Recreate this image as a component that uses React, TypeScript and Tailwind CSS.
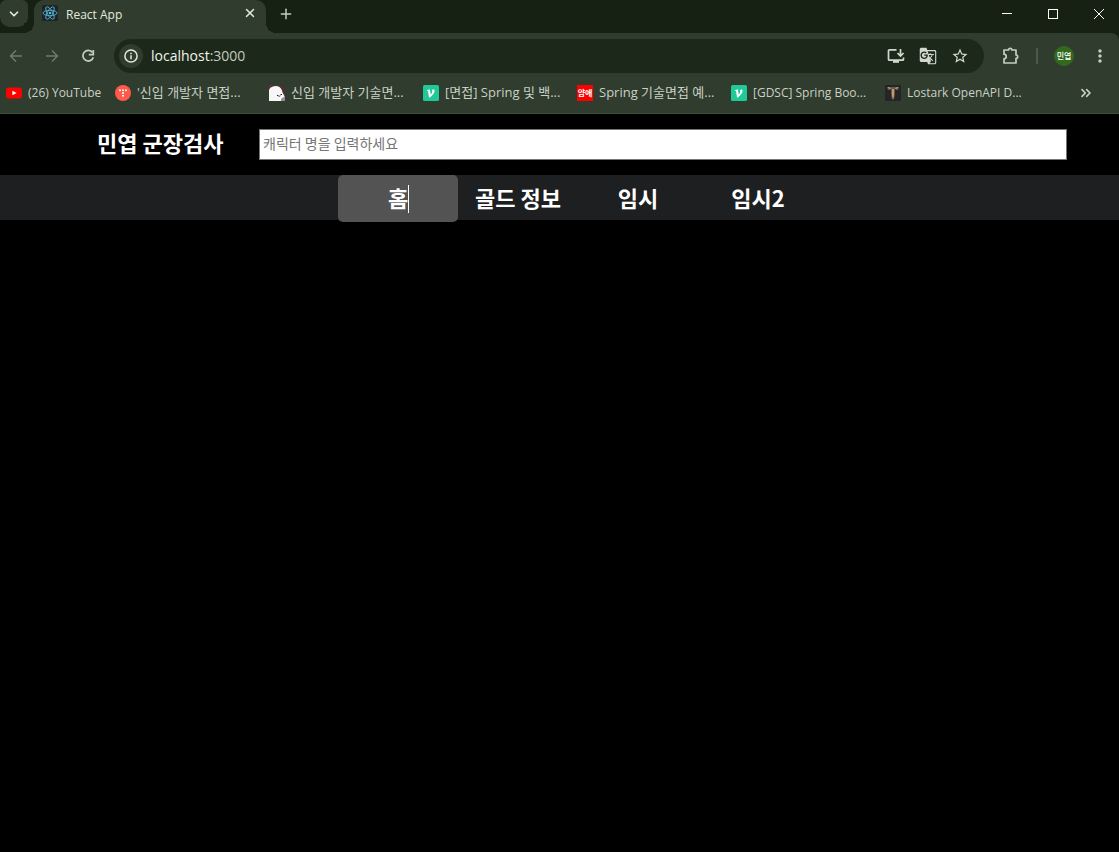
import { ReactNode } from 'react';
import { ChevronDown, ChevronsRight, Plus, X } from 'lucide-react';
import { MdGTranslate, MdMoreVert, MdStarBorder } from 'react-icons/md';

interface Bookmark {
  title: string;
  icon: ReactNode;
  className: string;
}

function ReactLogo() {
  return (
    <svg viewBox="0 0 16 16" className="size-4 shrink-0" fill="none" stroke="#53c1de" strokeWidth="0.8">
      <rect width="16" height="16" rx="1.5" fill="#20232a" stroke="none" />
      <ellipse cx="8" cy="8" rx="7" ry="2.7" />
      <ellipse cx="8" cy="8" rx="7" ry="2.7" transform="rotate(60 8 8)" />
      <ellipse cx="8" cy="8" rx="7" ry="2.7" transform="rotate(120 8 8)" />
      <circle cx="8" cy="8" r="1.3" fill="#53c1de" stroke="none" />
    </svg>
  );
}

function YoutubeIcon() {
  return (
    <svg viewBox="0 0 16 16" className="size-4 shrink-0">
      <rect y="2.5" width="16" height="11" rx="2.8" fill="#f00" />
      <path d="M6.4 5.7v4.6L10.6 8z" fill="#fff" />
    </svg>
  );
}

function TistoryIcon() {
  return (
    <svg viewBox="0 0 16 16" className="size-4 shrink-0">
      <circle cx="8" cy="8" r="8" fill="#ff5a4a" />
      <g fill="#fff">
        <circle cx="5" cy="5.2" r="1" />
        <circle cx="8" cy="5.2" r="1" />
        <circle cx="11" cy="5.2" r="1" />
        <circle cx="8" cy="8" r="1" />
        <circle cx="8" cy="10.8" r="1" />
      </g>
    </svg>
  );
}

function SealIcon() {
  return (
    <svg viewBox="0 0 16 16" className="size-4 shrink-0">
      <rect width="16" height="16" fill="#4b3033" />
      <path d="M0 0h4L0 3z" fill="#7a2633" />
      <path d="M0 16V5c1-3 4-4 7-4 4 0 6 3 6.5 6.5L16 12v4z" fill="#f7f7f7" />
      <path d="M12 14l4-3v5h-4z" fill="#8f8f95" />
      <path d="M8 10.5h1.5M11.5 9.5h1.5" stroke="#222" />
      <path d="M9.5 11.5l2-.7" stroke="#555" />
    </svg>
  );
}

function VelogIcon() {
  return (
    <svg viewBox="0 0 16 16" className="size-4 shrink-0">
      <rect width="16" height="16" rx="1.5" fill="#20c997" />
      <path
        d="M4 5.3L6.9 4.2 7.7 9.6C9.3 7.8 9.7 6.6 9 5.2 9.2 4.3 11.6 3.9 11.6 5.7 11.6 7.7 9.3 10.6 6.8 12.5H6L5 5.9H4z"
        fill="#fff"
      />
    </svg>
  );
}

function GoodIcon() {
  return (
    <span className="flex size-4 shrink-0 items-center justify-center overflow-hidden bg-[#f00] text-[8px] leading-none font-bold text-white">
      얌애
    </span>
  );
}

function LostarkIcon() {
  return (
    <svg viewBox="0 0 16 16" className="size-4 shrink-0">
      <rect width="16" height="16" fill="#252426" />
      <path d="M2 2h12l-1 3h-2l-1-1.2V9l-1 5.5H7L6 9V3.8L5 5H3z" fill="#6b5a4e" />
      <path d="M7 4h2v7l-1 3-1-3z" fill="#c89660" />
      <path d="M3 2.5l2.5 1M13 2.5l-2.5 1" stroke="#b5aea8" />
    </svg>
  );
}

function InstallIcon() {
  return (
    <svg viewBox="0 0 18 18" className="size-[18px]" fill="none" stroke="currentColor" strokeWidth="1.7">
      <path d="M9.5 2.8H2.5a1 1 0 0 0-1 1v8.4a1 1 0 0 0 1 1h13a1 1 0 0 0 1-1V10.5" />
      <path d="M13.5 2v6.5M10.5 6l3 3 3-3" />
      <path d="M6 14.8h6" strokeWidth="2" />
    </svg>
  );
}

function PuzzleIcon() {
  return (
    <svg viewBox="0 0 18 18" className="size-[18px]" fill="none" stroke="currentColor" strokeWidth="1.7" strokeLinejoin="round">
      <path d="M2 3h4.5a1.7 1.7 0 0 1 3.4 0H14v5a1.7 1.7 0 0 1 0 3.4V16H2v-4.2c3 0 3-4.6 0-4.6z" />
    </svg>
  );
}

function ArrowIcon({ flip }: { flip?: boolean }) {
  return (
    <svg
      viewBox="0 0 14 14"
      className={`size-3.5 ${flip ? 'rotate-180' : ''}`}
      fill="none"
      stroke="currentColor"
      strokeWidth="1.5"
    >
      <path d="M13 7H2M7 1.5L1.5 7 7 12.5" />
    </svg>
  );
}

function ReloadIcon() {
  return (
    <svg viewBox="0 0 14 14" className="size-3.5" fill="none" stroke="currentColor" strokeWidth="1.7">
      <path d="M11.5 3.6A5.3 5.3 0 1 0 12.3 8.2" />
      <path d="M12.3 1v4.6H7.8" />
    </svg>
  );
}

function InfoIcon() {
  return (
    <svg viewBox="0 0 14 14" className="size-3.5" fill="none" stroke="currentColor" strokeWidth="1.5">
      <circle cx="7" cy="7" r="6.1" />
      <path d="M7 6.2v4M7 3.7v1.5" />
    </svg>
  );
}

const bookmarks: Bookmark[] = [
  { title: '(26) YouTube', icon: <YoutubeIcon />, className: 'w-[109px] text-xs' },
  { title: "'신입 개발자 면접...", icon: <TistoryIcon />, className: 'w-[154px] text-[13px]' },
  { title: '신입 개발자 기술면...', icon: <SealIcon />, className: 'w-[154px] text-[13px]' },
  { title: '[면접] Spring 및 백...', icon: <VelogIcon />, className: 'w-[154px] text-[13px]' },
  { title: 'Spring 기술면접 예...', icon: <GoodIcon />, className: 'w-[154px] text-[13px]' },
  { title: '[GDSC] Spring Boo...', icon: <VelogIcon />, className: 'w-[154px] text-xs' },
  { title: 'Lostark OpenAPI D...', icon: <LostarkIcon />, className: 'w-[154px] text-xs' },
];

const menus = ['홈', '골드 정보', '임시', '임시2'];

function TabStrip() {
  return (
    <div className="flex h-[33px] items-start bg-[#162113] text-[#e3e9df]">
      <button aria-label="탭 검색" className="flex h-[27px] w-7 items-center justify-center rounded-[10px] rounded-t-md bg-[#303c2d]">
        <ChevronDown className="size-3.5" strokeWidth={3} />
      </button>
      <div className="relative ml-1.5 flex h-[33px] w-[232px] items-start rounded-t-[10px] bg-[#303c2d] pt-[5px] pr-[9px] pl-2">
        <span className="absolute bottom-0 -left-2.5 size-2.5 bg-[radial-gradient(circle_at_0_0,#162113_10px,#303c2d_10px)]" />
        <span className="absolute -right-2.5 bottom-0 size-2.5 bg-[radial-gradient(circle_at_100%_0,#162113_10px,#303c2d_10px)]" />
        <ReactLogo />
        <span className="ml-2 flex-1 text-xs leading-5">React App</span>
        <button aria-label="탭 닫기" className="flex h-4 items-center">
          <X className="size-3.5" strokeWidth={2.5} />
        </button>
      </div>
      <button aria-label="새 탭" className="ml-3 flex h-[27px] w-4 items-center justify-center text-[#c3d0bd]">
        <Plus className="size-4 shrink-0" strokeWidth={2.2} />
      </button>
      <div className="ml-auto flex h-[27px] text-white">
        <button aria-label="최소화" className="flex w-[46px] items-center justify-center">
          <span className="h-px w-2.5 bg-white" />
        </button>
        <button aria-label="최대화" className="flex w-[46px] items-center justify-center">
          <span className="size-2.5 border border-white" />
        </button>
        <button aria-label="닫기" className="flex w-[43px] items-center justify-center pl-[3px]">
          <svg viewBox="0 0 10 10" className="size-2.5" stroke="currentColor">
            <path d="M0 0l10 10M10 0L0 10" />
          </svg>
        </button>
      </div>
    </div>
  );
}

function Toolbar() {
  return (
    <div className="flex h-[46px] items-center rounded-tr-lg bg-[#303c2d] pl-[9px] text-[#c3d0bd]">
      <div className="flex items-center gap-[22px]">
        <button aria-label="뒤로" className="text-[#6f7c6a]">
          <ArrowIcon />
        </button>
        <button aria-label="앞으로" className="text-[#6f7c6a]">
          <ArrowIcon flip />
        </button>
        <button aria-label="새로고침">
          <ReloadIcon />
        </button>
      </div>
      <div className="ml-[19px] flex h-[34px] flex-1 items-center rounded-full bg-[#1c2819] pr-[15px] pl-[5px]">
        <button aria-label="사이트 정보" className="flex size-6 items-center justify-center rounded-full bg-[#303c2d] text-[#e3e9df]">
          <InfoIcon />
        </button>
        <div className="ml-2 flex-1 text-sm text-[#c3c9bf]">
          <span className="text-[#f0f4ec]">localhost</span>:3000
        </div>
        <div className="flex items-center gap-3.5 text-[#d2d8ce]">
          <button aria-label="앱 설치">
            <InstallIcon />
          </button>
          <button aria-label="번역">
            <MdGTranslate className="size-[18px]" />
          </button>
          <button aria-label="북마크 추가">
            <MdStarBorder className="size-[18px]" />
          </button>
        </div>
      </div>
      <button aria-label="확장 프로그램" className="ml-[18px]">
        <PuzzleIcon />
      </button>
      <span className="ml-4 h-4 w-0.5 bg-[#4b5a47]" />
      <button className="ml-4 flex size-5 items-center justify-center rounded-full bg-[#33691e] text-[8px] font-medium whitespace-nowrap text-white">
        민엽
      </button>
      <button aria-label="메뉴" className="mr-[9px] ml-4">
        <MdMoreVert className="size-5" />
      </button>
    </div>
  );
}

function BookmarkBar() {
  return (
    <div className="flex h-[35px] items-start border-b border-[#414d3e] bg-[#303c2d] pt-[5px] pl-1.5 text-[#c9d0c5]">
      {bookmarks.map((bookmark) => (
        <a
          key={bookmark.title}
          href="#"
          className={`flex h-[18px] shrink-0 items-center gap-1.5 whitespace-nowrap ${bookmark.className}`}
        >
          {bookmark.icon}
          {bookmark.title}
        </a>
      ))}
      <button aria-label="북마크 더보기" className="mr-[25px] ml-auto flex h-[18px] items-center">
        <ChevronsRight className="size-4" strokeWidth={2.5} />
      </button>
    </div>
  );
}

export default function App() {
  return (
    <div className="min-h-screen bg-black font-['Open_Sans','Noto_Sans_CJK_KR',sans-serif]">
      <TabStrip />
      <div className="bg-[#162113]">
        <Toolbar />
      </div>
      <BookmarkBar />

      <header className="flex h-[61px] items-center pr-[52px] pl-[97px] font-['Noto_Sans_CJK_KR',sans-serif]">
        <h1 className="w-[162px] shrink-0 pb-1.5 text-[22px] leading-7 font-bold text-white">민엽 군장검사</h1>
        <input
          type="text"
          aria-label="캐릭터 명"
          placeholder="캐릭터 명을 입력하세요"
          className="h-[31px] min-w-0 flex-1 border border-[#767676] bg-white px-[3px] pb-1 text-sm text-black placeholder:text-[#757575]"
        />
      </header>

      <nav className="flex h-[45px] justify-center bg-[#1e1f21] pl-[37px] font-['Noto_Sans_CJK_KR',sans-serif]">
        {menus.map((menu, index) => (
          <a
            key={menu}
            href="#"
            className={`flex h-[47px] w-[120px] items-center justify-center pb-1 text-[22px] leading-7 font-bold text-white ${
              index === 0 ? 'rounded-[5px] bg-[#535353]' : ''
            }`}
          >
            <span className="relative">
              {menu}
              {index === 0 && <span className="absolute top-0.5 -right-px h-7 w-px bg-white" />}
            </span>
          </a>
        ))}
      </nav>
    </div>
  );
}
